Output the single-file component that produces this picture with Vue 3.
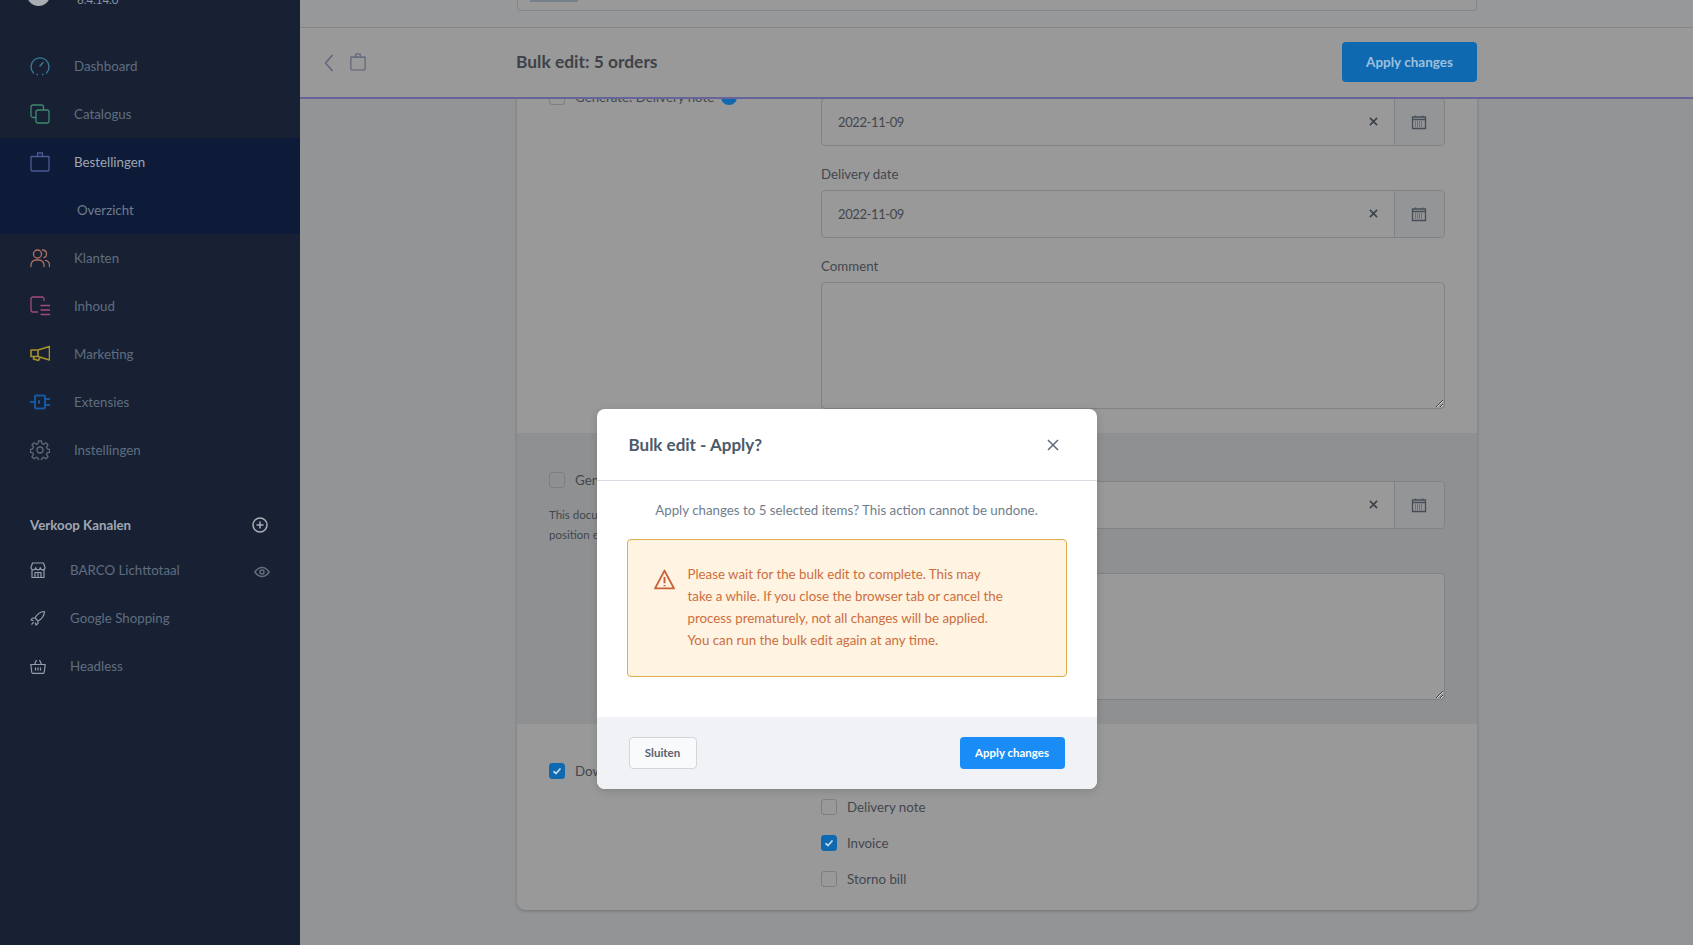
<template>
  <div class="app">
    <aside class="nav">
      <div class="nav-head">
        <span class="logo"></span>
        <span class="version">6.4.14.0</span>
      </div>

      <ul class="nav-list">
        <template v-for="item in navItems" :key="item.label">
          <li class="nav-item" :class="{ active: item.active }">
            <svg class="nav-icon" viewBox="0 0 20 20" :style="{ color: item.color }" :stroke-width="item.weight">
              <path :d="item.d" />
            </svg>
            <span>{{ item.label }}</span>
          </li>
          <li v-if="item.active" class="nav-sub">Overzicht</li>
        </template>
      </ul>

      <div class="channels-head">
        <span>Verkoop Kanalen</span>
        <svg class="channels-add" viewBox="0 0 16 16">
          <circle cx="8" cy="8" r="7" />
          <path d="M8 4.500v7M4.500 8h7" />
        </svg>
      </div>
      <ul class="channels">
        <li v-for="channel in channels" :key="channel.label" class="channel">
          <svg class="channel-icon" viewBox="0 0 16 16"><path :d="channel.d" /></svg>
          <span>{{ channel.label }}</span>
          <svg v-if="channel.visible" class="channel-eye" viewBox="0 0 16 16">
            <path d="M.8 8C3 5 5.300 3.500 8 3.500S13 5 15.200 8C13 11 10.700 12.500 8 12.500S3 11 .8 8z" />
            <circle cx="8" cy="8" r="2" />
          </svg>
        </li>
      </ul>
    </aside>

    <main class="main">
      <div class="top-strip">
        <div class="top-card"><span class="top-card-bar"></span></div>
      </div>

      <header class="smart-bar">
        <svg class="back" viewBox="0 0 10 20"><path d="M8.500 2 1.500 10l7 8" /></svg>
        <svg class="bag" viewBox="0 0 18 20"><path d="M1 4.500h16v13.500a1 1 0 0 1-1 1H2a1 1 0 0 1-1-1zM6.500 4.500V1h5v3.500" /></svg>
        <h1 class="page-title">Bulk edit: 5 orders</h1>
        <button class="save-btn">Apply changes</button>
      </header>

      <div class="scroller">
        <div class="card">
          <section class="row">
            <div class="row-left">
              <label class="check-line">
                <span class="check"></span>
                <span>Generate: Delivery note</span>
                <span class="info-dot"></span>
              </label>
            </div>
            <div class="row-right">
              <div v-for="name in ['Document date', 'Delivery date']" :key="name" class="field">
                <div class="field-label">{{ name }}</div>
                <div class="date-input">
                  <span class="date-value">2022-11-09</span>
                  <svg class="clear" viewBox="0 0 10 10"><path d="M1 1l8 8M9 1l-8 8" /></svg>
                  <span class="date-suffix">
                    <svg class="calendar" viewBox="0 0 16 16">
                      <path d="M1.500 3h13v11.500h-13zM1.500 5.500h13M4.500 1.500V3M11.500 1.500V3" />
                      <path class="calendar-dots" d="M4 8h8M4 10h8M4 12h8" />
                    </svg>
                  </span>
                </div>
              </div>
              <div class="field">
                <div class="field-label">Comment</div>
                <textarea class="comment"></textarea>
              </div>
            </div>
          </section>

          <section class="row row-dark">
            <div class="row-left">
              <label class="check-line">
                <span class="check"></span>
                <span>Generate: Invoice</span>
              </label>
              <p class="hint">This document<br />position entered</p>
            </div>
            <div class="row-right">
              <div class="field">
                <div class="field-label">Document date</div>
                <div class="date-input">
                  <span class="date-value"></span>
                  <svg class="clear" viewBox="0 0 10 10"><path d="M1 1l8 8M9 1l-8 8" /></svg>
                  <span class="date-suffix">
                    <svg class="calendar" viewBox="0 0 16 16">
                      <path d="M1.500 3h13v11.500h-13zM1.500 5.500h13M4.500 1.500V3M11.500 1.500V3" />
                      <path class="calendar-dots" d="M4 8h8M4 10h8M4 12h8" />
                    </svg>
                  </span>
                </div>
              </div>
              <div class="field">
                <div class="field-label">Comment</div>
                <textarea class="comment"></textarea>
              </div>
            </div>
          </section>

          <section class="row row-last">
            <div class="row-left">
              <label class="check-line">
                <span class="check checked"><svg viewBox="0 0 10 10"><path d="M1.500 5.300 4 7.500l4.500-5" /></svg></span>
                <span>Download documents</span>
              </label>
            </div>
            <div class="row-right doc-list">
              <label v-for="doc in documents" :key="doc.label" class="check-line">
                <span class="check" :class="{ checked: doc.checked }">
                  <svg v-if="doc.checked" viewBox="0 0 10 10"><path d="M1.500 5.300 4 7.500l4.500-5" /></svg>
                </span>
                <span>{{ doc.label }}</span>
              </label>
            </div>
          </section>
        </div>
      </div>
    </main>

    <div class="modal-wrap">
      <div class="modal">
        <div class="modal-header">
          <h3 class="modal-title">Bulk edit - Apply?</h3>
          <svg class="modal-close" viewBox="0 0 12 12"><path d="M1 1l10 10M11 1 1 11" /></svg>
        </div>
        <div class="modal-body">
          <p class="modal-desc">Apply changes to 5 selected items? This action cannot be undone.</p>
          <div class="alert">
            <svg class="alert-icon" viewBox="0 0 20 20">
              <path d="M10 1.500 19 18.500H1z" />
              <path d="M10 7.500v6M10 15.300v1.200" />
            </svg>
            <p class="alert-text">
              Please wait for the bulk edit to complete. This may<br />
              take a while. If you close the browser tab or cancel the<br />
              process prematurely, not all changes will be applied.<br />
              You can run the bulk edit again at any time.
            </p>
          </div>
        </div>
        <div class="modal-footer">
          <button class="modal-button cancel-button">Sluiten</button>
          <button class="modal-button confirm-button">Apply changes</button>
        </div>
      </div>
    </div>
  </div>
</template>

<script setup>
const navItems = [
  { label: 'Dashboard', color: '#3b7c99', weight: 1.3, d: 'M3.500 17A9 9 0 1 1 16.500 17M10 10l3-3.500M7 18.500h.5M12.500 18.500h.5' },
  { label: 'Catalogus', color: '#3d8a70', weight: 1.3, d: 'M5.500 13.500H3a2 2 0 0 1-2-2V3a2 2 0 0 1 2-2h8.500a2 2 0 0 1 2 2v2.500M8 6h9a2 2 0 0 1 2 2v9a2 2 0 0 1-2 2H8a2 2 0 0 1-2-2V8a2 2 0 0 1 2-2z' },
  { label: 'Bestellingen', color: '#4c5995', weight: 1.3, active: true, d: 'M1 4.500h18V18a1 1 0 0 1-1 1H2a1 1 0 0 1-1-1zM7.500 4.500V1h5v3.500' },
  { label: 'Klanten', color: '#b0705f', weight: 1.3, d: 'M7.500 2a4 4 0 1 1 0 8 4 4 0 0 1 0-8zM1 18.500V17a5 5 0 0 1 5-5h3a5 5 0 0 1 5 5v1.500M12.500 2a4 4 0 0 1 1.500 7.700M15.500 12.300a5 5 0 0 1 4 4.700v1.500' },
  { label: 'Inhoud', color: '#a54a7d', weight: 1.3, d: 'M14 4.500V3a2 2 0 0 0-2-2H3a2 2 0 0 0-2 2v11a2 2 0 0 0 2 2h4.500M11 9.500h8.500M11 14h8.500M11 18.500h8.500' },
  { label: 'Marketing', color: '#a8922c', weight: 1.6, d: 'M19.500 2.500 8 6H1v6.500h7l11.500 3.500zM8 6v6.500M4 12.500l-.5 2.500 5 1.500L10 13.200' },
  { label: 'Extensies', color: '#17579e', weight: 2, d: 'M6 3.500h8a1 1 0 0 1 1 1v11a1 1 0 0 1-1 1H6a1 1 0 0 1-1-1v-11a1 1 0 0 1 1-1zM0 10h5M15 7h5M15 13h5M9 9v2' },
  { label: 'Instellingen', color: '#5d6977', weight: 1.3, d: 'M8.500 1h3l.5 2.600 1.700.7 2.200-1.500 2.100 2.100-1.500 2.200.7 1.700 2.300.5v3l-2.300.5-.7 1.700 1.500 2.200-2.100 2.100-2.200-1.500-1.700.7-.5 2.500h-3l-.5-2.500-1.700-.7-2.200 1.500-2.100-2.100 1.500-2.200-.7-1.700-2.300-.5v-3l2.300-.5.7-1.700-1.500-2.200L4.100 2.800l2.200 1.500 1.700-.7zM10 7a3 3 0 1 1 0 6 3 3 0 0 1 0-6z' }
]

const channels = [
  { label: 'BARCO Lichttotaal', visible: true, d: 'M1 5.500 2.500 1h11L15 5.500a2.300 2.300 0 0 1-4.700 0 2.300 2.300 0 0 1-4.600 0 2.300 2.300 0 0 1-4.700 0zM2 8v7.500h12V8M5 15.500V10.500h6v5M8 10.500v5' },
  { label: 'Google Shopping', d: 'M14.500 1.500c-4.300.3-7.500 2.600-9.500 6.500l3 3c3.900-2 6.200-5.200 6.500-9.500zM5 8H2.500L1 10l2.500.7M8 11v2.500L6 15l-.7-2.500M3.800 12.200 1.500 14.500' },
  { label: 'Headless', d: 'M.8 6.500h14.400l-1 8a1 1 0 0 1-1 .8H2.800a1 1 0 0 1-1-.8zM4.500 6.500 6.500 2M11.500 6.500 9.500 2M5.500 9.500v3M8 9.500v3M10.500 9.500v3' }
]

const documents = [
  { label: 'Delivery note', checked: false },
  { label: 'Invoice', checked: true },
  { label: 'Storno bill', checked: false }
]
</script>

<style>
html,
body {
  margin: 0;
  height: 100%;
  overflow: hidden;
}
</style>

<style scoped>
.app {
  position: relative;
  display: flex;
  width: 1693px;
  height: 945px;
  overflow: hidden;
  font-family: "Lato", "Noto Sans", sans-serif;
  font-size: 13.3px;
  background: #929496;
}

ul {
  list-style: none;
  margin: 0;
  padding: 0;
}

/* sidebar */
.nav {
  flex: 0 0 300px;
  background: #182133;
  color: #5f6e80;
}

.nav-head {
  position: relative;
  height: 42px;
  overflow: hidden;
}

.logo {
  position: absolute;
  top: -22px;
  left: 26px;
  width: 25px;
  height: 28px;
  border-radius: 50%;
  background: #a9acb1;
}

.version {
  position: absolute;
  top: -7px;
  left: 77px;
  font-size: 11.5px;
  color: #8e96a1;
}

.nav-item {
  display: flex;
  align-items: center;
  gap: 24px;
  height: 48px;
  padding-left: 30px;
}

.nav-item.active,
.nav-sub {
  background: #0e1b38;
  color: #9ea7b3;
}

.nav-sub {
  height: 48px;
  padding-left: 77px;
  line-height: 48px;
  color: #6e7c8e;
}

.nav-icon {
  width: 20px;
  height: 20px;
  fill: none;
  stroke: currentColor;
  stroke-linejoin: round;
  stroke-linecap: round;
}

.channels-head {
  display: flex;
  align-items: center;
  justify-content: space-between;
  margin-top: 39px;
  padding: 0 32px 0 30px;
  height: 24px;
  font-weight: 700;
  color: #a0a8b3;
}

.channels-add {
  width: 16px;
  height: 16px;
  fill: none;
  stroke: #a7adb5;
  stroke-width: 1.500;
}

.channels {
  margin-top: 9px;
}

.channel {
  display: flex;
  align-items: center;
  height: 48px;
  padding-left: 30px;
}

.channel-icon {
  flex: none;
  width: 16px;
  height: 16px;
  margin-right: 24px;
  fill: none;
  stroke: #949daa;
  stroke-width: 1.200;
  stroke-linejoin: round;
}

.channel-eye {
  width: 16px;
  height: 16px;
  margin-left: auto;
  margin-right: 30px;
  margin-top: 3px;
  fill: none;
  stroke: #616e7e;
  stroke-width: 1.500;
}

/* main */
.main {
  flex: 1;
  display: flex;
  flex-direction: column;
  min-width: 0;
}

.top-strip {
  flex: none;
  height: 27px;
  border-bottom: 1px solid #858688;
  background: #979899;
}

.top-card {
  width: 958px;
  height: 10px;
  margin-left: 217px;
  border: 1px solid #858688;
  border-top: 0;
  border-radius: 0 0 4px 4px;
  background: #999;
}

.top-card-bar {
  display: block;
  width: 48px;
  height: 2px;
  margin-left: 12px;
  background: #75808a;
}

.smart-bar {
  flex: none;
  position: relative;
  z-index: 2;
  display: flex;
  align-items: center;
  height: 69px;
  padding: 0 216px 0 24px;
  border-bottom: 2px solid #67649a;
  background: #999;
}

.back {
  width: 10px;
  height: 20px;
  margin-right: 16px;
  fill: none;
  stroke: #5c5f7d;
  stroke-width: 1.300;
}

.bag {
  width: 16px;
  height: 18px;
  margin-top: -2px;
  fill: none;
  stroke: #5a5e74;
  stroke-width: 1.200;
}

.page-title {
  margin: -2px 0 0 150px;
  font-size: 17.4px;
  font-weight: 700;
  color: #3e4248;
}

.save-btn {
  margin-left: auto;
  margin-top: -2px;
  width: 135px;
  height: 40px;
  border: 0;
  border-radius: 4px;
  background: #0f69b0;
  color: #9cc0de;
  font: 700 13.5px "Lato", "Noto Sans", sans-serif;
}

.scroller {
  flex: 1;
  overflow: hidden;
}

.card {
  width: 960px;
  margin: -49px 0 0 217px;
  border-radius: 8px;
  background: #999;
  box-shadow: 0 1px 3px rgba(0, 0, 0, 0.25);
  overflow: hidden;
  color: #43474d;
}

.row {
  display: grid;
  grid-template-columns: 272px 1fr;
  padding: 22px 32px 24px 32px;
}

.row-dark {
  background: #8e9092;
}

.row-last {
  padding-top: 39px;
  padding-bottom: 23px;
}

.row-left {
  padding-top: 17px;
  white-space: nowrap;
}

.row-last .row-left {
  padding-top: 0;
}

.check-line {
  display: flex;
  align-items: center;
  gap: 10px;
  height: 16px;
}

.check {
  flex: none;
  display: flex;
  align-items: center;
  justify-content: center;
  box-sizing: border-box;
  width: 16px;
  height: 16px;
  border: 1px solid #7d7f81;
  border-radius: 3px;
}

.check.checked {
  border-color: #0f69b0;
  background: #0f69b0;
}

.check svg {
  width: 10px;
  height: 10px;
  fill: none;
  stroke: #c2d6e8;
  stroke-width: 1.800;
}

.info-dot {
  width: 16px;
  height: 16px;
  margin-left: -3px;
  border-radius: 50%;
  background: #1268ae;
}

.hint {
  margin: 17px 0 0;
  font-size: 11.5px;
  line-height: 20px;
}

.field {
  margin-bottom: 18px;
}

.field:last-child {
  margin-bottom: 0;
}

.field-label {
  height: 20px;
  margin-bottom: 6px;
  line-height: 20px;
}

.date-input {
  display: flex;
  align-items: center;
  box-sizing: border-box;
  height: 48px;
  padding-left: 16px;
  border: 1px solid #808284;
  border-radius: 4px;
  background: #999;
}

.date-value {
  flex: 1;
  font-size: 13px;
  letter-spacing: -0.4px;
}

.clear {
  width: 9px;
  height: 9px;
  margin: -2px 16px 0 0;
  fill: none;
  stroke: #3c424a;
  stroke-width: 1.800;
}

.date-suffix {
  display: flex;
  align-items: center;
  justify-content: center;
  align-self: stretch;
  box-sizing: border-box;
  width: 50px;
  padding-right: 2px;
  border-left: 1px solid #808284;
  background: #939597;
  border-radius: 0 4px 4px 0;
}

.calendar {
  width: 16px;
  height: 16px;
  fill: none;
  stroke: #464d57;
  stroke-width: 1.300;
}

.calendar .calendar-dots {
  stroke-width: 1;
  stroke-dasharray: 1 1;
}

.comment {
  display: block;
  box-sizing: border-box;
  width: 100%;
  height: 127px;
  border: 1px solid #808284;
  border-radius: 4px;
  background: #999;
  resize: vertical;
  outline: none;
}

.doc-list {
  display: flex;
  flex-direction: column;
  gap: 20px;
  padding-top: 36px;
}

/* modal */
.modal-wrap {
  position: absolute;
  inset: 0;
  z-index: 5;
  display: flex;
  justify-content: center;
  align-items: flex-start;
  padding-top: 409px;
}

.modal {
  width: 500px;
  height: 380px;
  display: flex;
  flex-direction: column;
  background: #fff;
  border-radius: 8px;
  overflow: hidden;
  box-shadow: 0 2px 8px rgba(0, 0, 0, 0.15);
}

.modal-header {
  flex: none;
  display: flex;
  align-items: center;
  justify-content: space-between;
  height: 71px;
  padding: 0 38px 0 32px;
  border-bottom: 1px solid #d9dde3;
}

.modal-title {
  margin: 0;
  font-size: 17px;
  font-weight: 700;
  color: #4b5a69;
}

.modal-close {
  width: 12px;
  height: 12px;
  fill: none;
  stroke: #5c6a79;
  stroke-width: 1.500;
}

.modal-body {
  flex: 1;
  padding: 0 30px;
}

.modal-desc {
  margin: 19px 0 19px;
  text-align: center;
  line-height: 20px;
  color: #6f7e8d;
}

.alert {
  display: flex;
  box-sizing: border-box;
  height: 138px;
  padding: 23px 20px 0 26px;
  border: 1px solid #e3a94f;
  border-radius: 4px;
  background: #fff3e1;
}

.alert-icon {
  flex: none;
  width: 21px;
  height: 21px;
  margin: 6px 13px 0 0;
  fill: none;
  stroke: #c8613a;
  stroke-width: 1.800;
  stroke-linejoin: round;
}

.alert-text {
  margin: 0;
  line-height: 22px;
  color: #cc6e40;
}

.modal-footer {
  flex: none;
  display: flex;
  align-items: center;
  justify-content: space-between;
  height: 72px;
  padding: 0 32px;
  background: #f0f2f5;
}

.modal-button {
  height: 32px;
  padding-bottom: 2px;
  border-radius: 4px;
  font: 700 11.5px "Lato", "Noto Sans", sans-serif;
}

.cancel-button {
  width: 68px;
  border: 1px solid #d1d6dc;
  background: #f9fafb;
  color: #56636f;
}

.confirm-button {
  width: 105px;
  border: 0;
  background: #1a8cf5;
  color: #fff;
}
</style>
